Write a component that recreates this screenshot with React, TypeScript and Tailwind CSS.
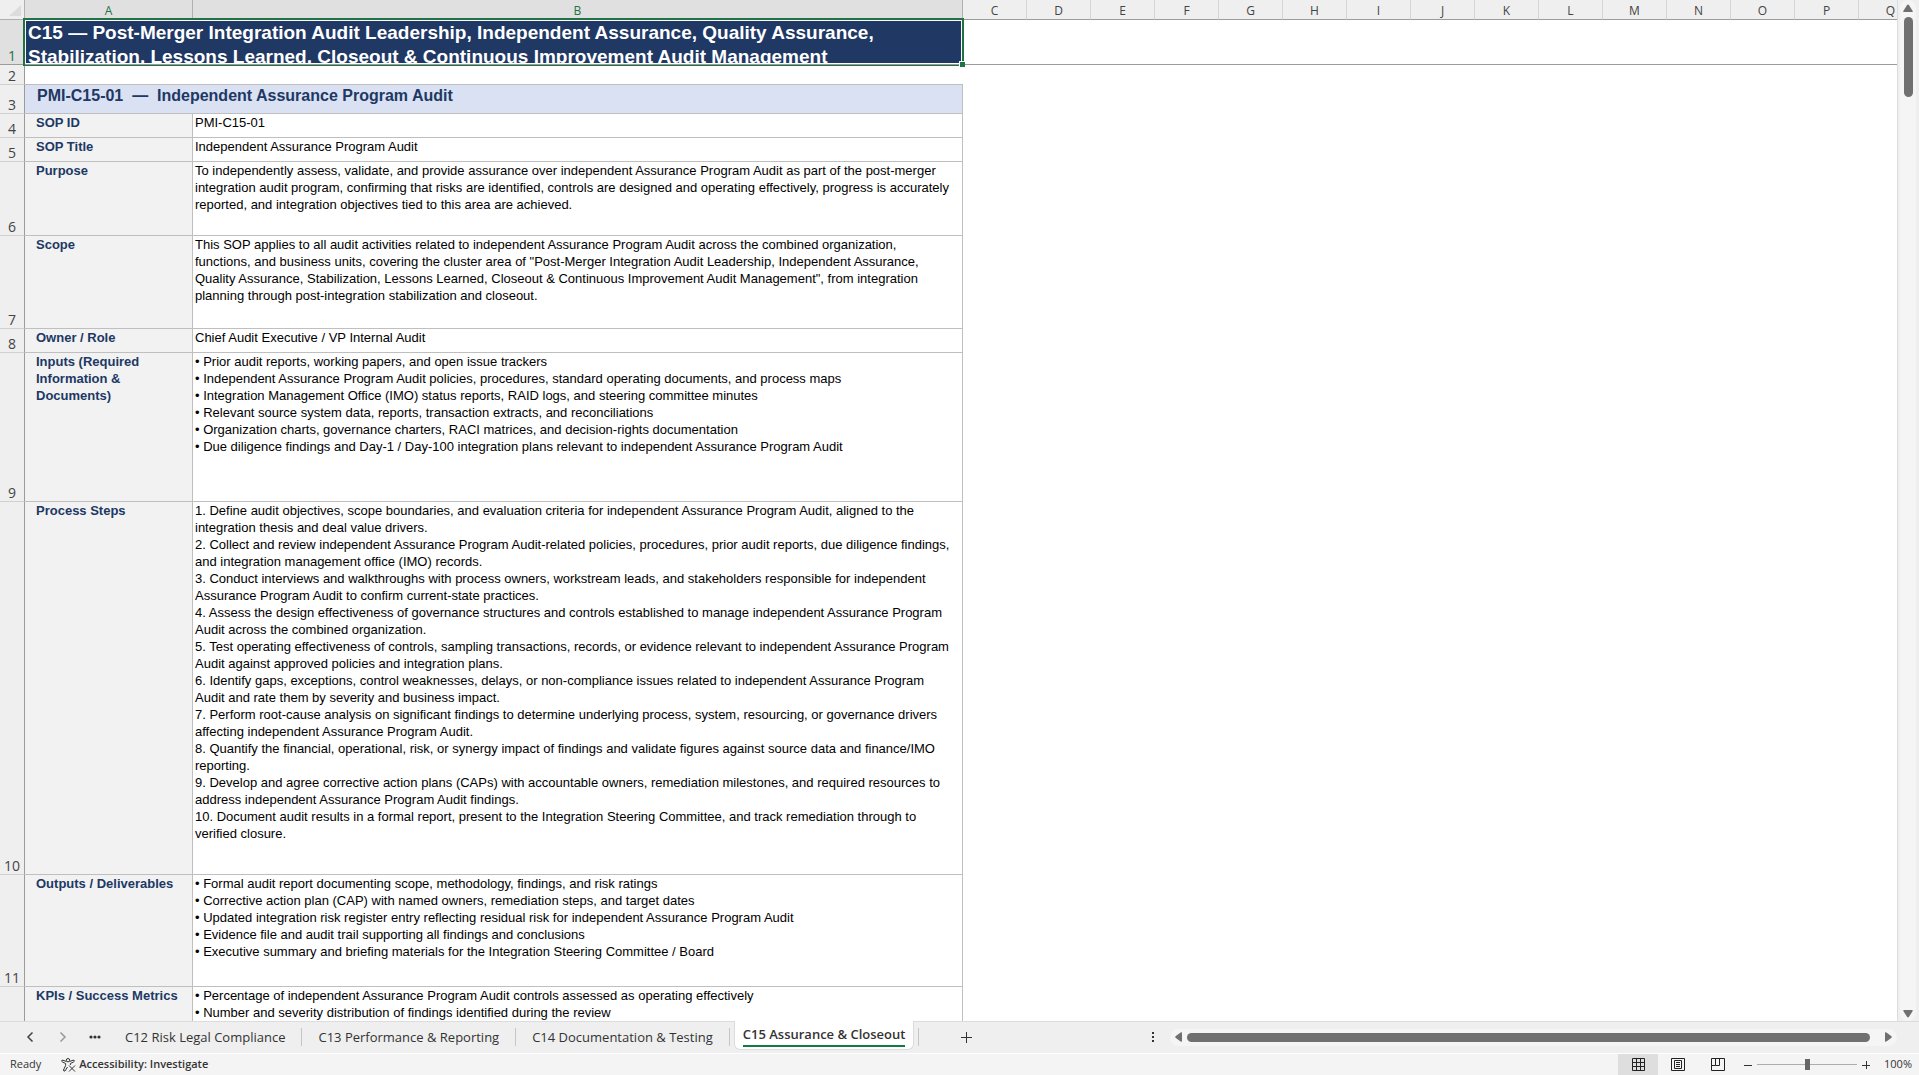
import { clsx } from "clsx";

interface SheetRow {
  label: string;
  value: string;
  height: string;
}

const COLUMNS = "CDEFGHIJKLMNOPQ".split("");

const ROWS: SheetRow[] = [
  { label: "SOP ID", value: "PMI-C15-01", height: "h-[24px]" },
  { label: "SOP Title", value: "Independent Assurance Program Audit", height: "h-[24px]" },
  {
    label: "Purpose",
    height: "h-[74px]",
    value: `To independently assess, validate, and provide assurance over independent Assurance Program Audit as part of the post-merger
integration audit program, confirming that risks are identified, controls are designed and operating effectively, progress is accurately
reported, and integration objectives tied to this area are achieved.`,
  },
  {
    label: "Scope",
    height: "h-[93px]",
    value: `This SOP applies to all audit activities related to independent Assurance Program Audit across the combined organization,
functions, and business units, covering the cluster area of "Post-Merger Integration Audit Leadership, Independent Assurance,
Quality Assurance, Stabilization, Lessons Learned, Closeout & Continuous Improvement Audit Management", from integration
planning through post-integration stabilization and closeout.`,
  },
  { label: "Owner / Role", value: "Chief Audit Executive / VP Internal Audit", height: "h-[24px]" },
  {
    label: "Inputs (Required\nInformation &\nDocuments)",
    height: "h-[149px]",
    value: `• Prior audit reports, working papers, and open issue trackers
• Independent Assurance Program Audit policies, procedures, standard operating documents, and process maps
• Integration Management Office (IMO) status reports, RAID logs, and steering committee minutes
• Relevant source system data, reports, transaction extracts, and reconciliations
• Organization charts, governance charters, RACI matrices, and decision-rights documentation
• Due diligence findings and Day-1 / Day-100 integration plans relevant to independent Assurance Program Audit`,
  },
  {
    label: "Process Steps",
    height: "h-[373px]",
    value: `1. Define audit objectives, scope boundaries, and evaluation criteria for independent Assurance Program Audit, aligned to the
integration thesis and deal value drivers.
2. Collect and review independent Assurance Program Audit-related policies, procedures, prior audit reports, due diligence findings,
and integration management office (IMO) records.
3. Conduct interviews and walkthroughs with process owners, workstream leads, and stakeholders responsible for independent
Assurance Program Audit to confirm current-state practices.
4. Assess the design effectiveness of governance structures and controls established to manage independent Assurance Program
Audit across the combined organization.
5. Test operating effectiveness of controls, sampling transactions, records, or evidence relevant to independent Assurance Program
Audit against approved policies and integration plans.
6. Identify gaps, exceptions, control weaknesses, delays, or non-compliance issues related to independent Assurance Program
Audit and rate them by severity and business impact.
7. Perform root-cause analysis on significant findings to determine underlying process, system, resourcing, or governance drivers
affecting independent Assurance Program Audit.
8. Quantify the financial, operational, risk, or synergy impact of findings and validate figures against source data and finance/IMO
reporting.
9. Develop and agree corrective action plans (CAPs) with accountable owners, remediation milestones, and required resources to
address independent Assurance Program Audit findings.
10. Document audit results in a formal report, present to the Integration Steering Committee, and track remediation through to
verified closure.`,
  },
  {
    label: "Outputs / Deliverables",
    height: "h-[112px]",
    value: `• Formal audit report documenting scope, methodology, findings, and risk ratings
• Corrective action plan (CAP) with named owners, remediation steps, and target dates
• Updated integration risk register entry reflecting residual risk for independent Assurance Program Audit
• Evidence file and audit trail supporting all findings and conclusions
• Executive summary and briefing materials for the Integration Steering Committee / Board`,
  },
  {
    label: "KPIs / Success Metrics",
    height: "h-[35px]",
    value: `• Percentage of independent Assurance Program Audit controls assessed as operating effectively
• Number and severity distribution of findings identified during the review`,
  },
];

const TABS = ["C12 Risk Legal Compliance", "C13 Performance & Reporting", "C14 Documentation & Testing"];

const RowNumber = ({ n, selected = false, last = false }: { n?: number; selected?: boolean; last?: boolean }) => (
  <th
    scope="row"
    className={clsx(
      "border-r border-r-[#9b9b9b] p-0 text-center align-bottom font-['Open_Sans',sans-serif] text-sm leading-4 font-normal",
      !last && "border-b",
      selected ? "border-b-[#9b9b9b] bg-[#e0e0e0] text-[#217346]" : "border-b-[#d0d0d0] bg-[#efefef] text-[#444]",
    )}
  >
    {n}
  </th>
);

const Sheet = () => (
  <div className="relative min-w-0 flex-1 overflow-hidden border-r border-[#dcdcdc] bg-white">
    <table className="w-[1923px] table-fixed border-separate border-spacing-0 font-['Liberation_Sans',Arial,sans-serif]">
      <colgroup>
        <col className="w-[25px]" />
        <col className="w-[168px]" />
        <col className="w-[770px]" />
        {COLUMNS.map((c) => (
          <col key={c} className="w-[64px]" />
        ))}
      </colgroup>
      <thead>
        <tr className="h-[20px] font-['Open_Sans',sans-serif] text-xs text-[#444]">
          <td className="border-r border-b border-[#b0b0b0] bg-[#efefef] p-0">
            <svg viewBox="0 0 24 19" className="block h-[19px] w-6">
              <path d="M21 5v11H9z" fill="#dcdcdc" />
            </svg>
          </td>
          {["A", "B"].map((c) => (
            <th
              key={c}
              scope="col"
              className="border-r border-b border-[#b0b0b0] bg-[#e0e0e0] p-0 align-bottom leading-[17px] font-normal text-[#217346]"
            >
              {c}
            </th>
          ))}
          {COLUMNS.map((c) => (
            <th
              key={c}
              scope="col"
              className="border-r border-b border-r-[#d6d6d6] border-b-[#9b9b9b] bg-[#efefef] p-0 align-bottom leading-[17px] font-normal"
            >
              {c}
            </th>
          ))}
        </tr>
      </thead>
      <tbody>
        <tr>
          <RowNumber n={1} selected />
          <td colSpan={2} className="relative border-b border-[#9b9b9b] bg-[#203864] p-0 align-top">
            <div className="h-[44px] overflow-hidden pt-px pl-[3px] text-[19px] leading-[24px] font-bold whitespace-pre text-white">
              {`C15 — Post-Merger Integration Audit Leadership, Independent Assurance, Quality Assurance,
Stabilization, Lessons Learned, Closeout & Continuous Improvement Audit Management`}
            </div>
            {/* selection frame and fill handle; the freeze line stays visible just inside the bottom edge */}
            <div className="absolute -top-0.5 -right-px -bottom-0.5 -left-0.5 border-2 border-b border-[#217346]">
              <div className="h-[44px] border border-white" />
              <span className="absolute -right-[3px] -bottom-0.5 size-[6px] border-t border-l border-white bg-[#217346]" />
            </div>
          </td>
          <td colSpan={15} className="border-b border-[#9b9b9b] p-0" />
        </tr>
        <tr className="h-[20px]">
          <RowNumber n={2} />
          <td colSpan={2} className="border-b border-[#bfbfbf] p-0" />
        </tr>
        <tr className="h-[29px]">
          <RowNumber n={3} />
          <td
            colSpan={2}
            className="border-r border-b border-[#bfbfbf] bg-[#d9e1f2] p-0 pl-3 align-top text-base leading-[22px] font-bold whitespace-pre text-[#203864]"
          >
            PMI-C15-01  —  Independent Assurance Program Audit
          </td>
        </tr>
        {ROWS.map(({ label, value, height }, i) => {
          const last = i === ROWS.length - 1;
          return (
            <tr key={label} className={clsx(height, "text-[13px] leading-[17px] whitespace-pre")}>
              <RowNumber n={last ? undefined : i + 4} last={last} />
              <td
                className={clsx(
                  "border-r border-[#bfbfbf] bg-[#f2f2f2] p-0 pl-[11px] align-top font-bold text-[#203864]",
                  !last && "border-b",
                )}
              >
                {label}
              </td>
              <td className={clsx("border-r border-[#bfbfbf] p-0 pl-0.5 align-top text-black", !last && "border-b")}>
                {value}
              </td>
            </tr>
          );
        })}
      </tbody>
    </table>
  </div>
);

const VerticalScrollbar = () => (
  <div className="mr-[3px] ml-0.5 flex w-4 flex-col items-center rounded-full bg-[#f5f5f5]">
    <button type="button" aria-label="Scroll up" className="pt-1">
      <svg viewBox="0 0 10 8" className="block h-2 w-[10px] fill-[#707070]">
        <path d="M4 1.200a1.300 1.300 0 0 1 2 0L9.700 7q.3 1-.7 1H1Q0 8 .3 7z" />
      </svg>
    </button>
    <div className="mt-[5px] h-20 w-[9px] rounded-full bg-[#707070]" />
    <button type="button" aria-label="Scroll down" className="mt-auto pb-[3px]">
      <svg viewBox="0 0 10 8" className="block h-2 w-[10px] fill-[#707070]">
        <path d="M4 6.800a1.300 1.300 0 0 0 2 0L9.700 1Q10 0 9 0H1Q0 0 .3 1z" />
      </svg>
    </button>
  </div>
);

const HorizontalScrollbar = () => (
  <div className="mr-[22px] flex h-[17px] w-[727px] items-center rounded-full bg-[#f5f5f5] px-[5px]">
    <button type="button" aria-label="Scroll left">
      <svg viewBox="0 0 7 10" className="block h-[10px] w-[7px] fill-[#707070]">
        <path d="M.8 4a1.300 1.300 0 0 0 0 2L6 9.700q1 .3 1-.7V1q0-1-1-.7z" />
      </svg>
    </button>
    <div className="mr-[15px] ml-[5px] h-[9px] flex-1 rounded-full bg-[#707070]" />
    <button type="button" aria-label="Scroll right">
      <svg viewBox="0 0 7 10" className="block h-[10px] w-[7px] fill-[#707070]">
        <path d="M6.200 4a1.300 1.300 0 0 1 0 2L1 9.700q-1 .3-1-.7V1q0-1 1-.7z" />
      </svg>
    </button>
  </div>
);

const TabBar = () => (
  <div className="flex h-[32px] items-center border-t border-[#dcdcdc] bg-[#efefef] pb-px text-[13px] text-[#333]">
    <button type="button" aria-label="Previous sheet" className="ml-[26px]">
      <svg viewBox="0 0 8 10" className="block h-[10px] w-2 fill-none stroke-[#444] stroke-[1.500]">
        <path d="M6.500.500 2 5l4.500 4.500" />
      </svg>
    </button>
    <button type="button" aria-label="Next sheet" className="ml-[25px]">
      <svg viewBox="0 0 8 10" className="block h-[10px] w-2 fill-none stroke-[#999] stroke-[1.500]">
        <path d="M1.500.500 6 5 1.500 9.500" />
      </svg>
    </button>
    <button type="button" aria-label="All sheets" className="ml-[22px]">
      <svg viewBox="0 0 12 4" className="block h-1 w-3 fill-[#333]">
        <circle cx="2" cy="2" r="1.600" />
        <circle cx="6" cy="2" r="1.600" />
        <circle cx="10" cy="2" r="1.600" />
      </svg>
    </button>
    <div className="ml-2 flex items-center">
      {TABS.map((tab) => (
        <button key={tab} type="button" className="h-[18px] border-r border-[#c6c6c6] px-4 leading-[18px] whitespace-nowrap">
          {tab}
        </button>
      ))}
    </div>
    <button
      type="button"
      className="-mt-px ml-1 h-[29px] self-start rounded-b-md border-x border-b border-[#dcdcdc] bg-white px-2 font-semibold whitespace-nowrap"
    >
      <span className="block border-b-2 border-[#107c41] leading-[22px]">C15 Assurance &amp; Closeout</span>
    </button>
    <div className="ml-1 h-[18px] w-px bg-[#c6c6c6]" />
    <button type="button" aria-label="New sheet" className="ml-[42px]">
      <svg viewBox="0 0 11 11" className="block size-[11px] stroke-[#333]">
        <path d="M0 5.500h11M5.500 0v11" />
      </svg>
    </button>
    <svg viewBox="0 0 2 10" className="mr-4 ml-auto h-[10px] w-0.5 fill-[#333]">
      <path d="M0 0h2v2H0zM0 4h2v2H0zM0 8h2v2H0z" />
    </svg>
    <HorizontalScrollbar />
  </div>
);

const StatusBar = () => (
  <div className="flex h-[22px] items-center border-t border-white bg-[#f4f4f4] text-[11px] text-[#333]">
    <span className="ml-[10px]">Ready</span>
    <button type="button" className="ml-5 flex items-center gap-[3px] font-semibold">
      <svg viewBox="0 0 15 14" className="h-[14px] w-[15px] fill-none stroke-[#333]">
        <circle cx="7" cy="2.200" r="1.700" />
        <path d="M5.300 3.500 2 2.200Q.500 2 .600 3.200q.100.600 4 2.300v2L2.500 12q0 1.500 1.500 1l2.500-4M8.700 3.500 12 2.200q1.500-.200 1.400 1-.100.600-4 2.300v1.500M8 7.500l6 6M14 7.500l-6 6" />
      </svg>
      Accessibility: Investigate
    </button>
    <div className="ml-auto flex h-full items-center">
      <button type="button" aria-label="Normal view" className="flex h-full w-10 items-center justify-center bg-[#dedede]">
        <svg viewBox="0 0 13 13" className="size-[13px] fill-none stroke-[#222]">
          <path d="M.5.500h12v12H.500zM4.500.500v12M8.500.500v12M.500 4.500h12M.500 8.500h12" />
        </svg>
      </button>
      <button type="button" aria-label="Page layout view" className="flex h-full w-10 items-center justify-center">
        <svg viewBox="0 0 14 13" className="h-[13px] w-[14px] fill-none stroke-[#222]">
          <path d="M.500.500h13v12H.500zM3.500 2.500h7v8h-7zM5 4.500h4M5 6.500h4M5 8.500h4" />
        </svg>
      </button>
      <button type="button" aria-label="Page break preview" className="flex h-full w-10 items-center justify-center">
        <svg viewBox="0 0 14 13" className="h-[13px] w-[14px] fill-none stroke-[#222]">
          <path d="M.500.500h13v12H.500zM4.500.500v7h4v-7M.500 7.500h4" />
        </svg>
      </button>
      <button type="button" aria-label="Zoom out" className="ml-[6px]">
        <svg viewBox="0 0 8 8" className="block size-2 stroke-[#333]">
          <path d="M0 4.500h8" />
        </svg>
      </button>
      <input
        type="range"
        aria-label="Zoom"
        min={0}
        max={100}
        defaultValue={50}
        className="mx-[5px] h-[11px] w-[100px] appearance-none bg-linear-to-b from-transparent from-45% via-[#666] via-45% to-transparent to-55% [&::-webkit-slider-thumb]:h-[11px] [&::-webkit-slider-thumb]:w-[5px] [&::-webkit-slider-thumb]:appearance-none [&::-webkit-slider-thumb]:bg-[#666]"
      />
      <button type="button" aria-label="Zoom in">
        <svg viewBox="0 0 8 8" className="block size-2 stroke-[#333]">
          <path d="M0 4.500h8M4.500 0v8" />
        </svg>
      </button>
      <span className="mr-[7px] ml-[14px]">100%</span>
    </div>
  </div>
);

const App = () => (
  <div className="flex h-screen flex-col overflow-hidden bg-[#efefef] font-['Open_Sans','Noto_Sans',sans-serif]">
    <div className="flex min-h-0 flex-1">
      <Sheet />
      <VerticalScrollbar />
    </div>
    <TabBar />
    <StatusBar />
  </div>
);

export default App;
